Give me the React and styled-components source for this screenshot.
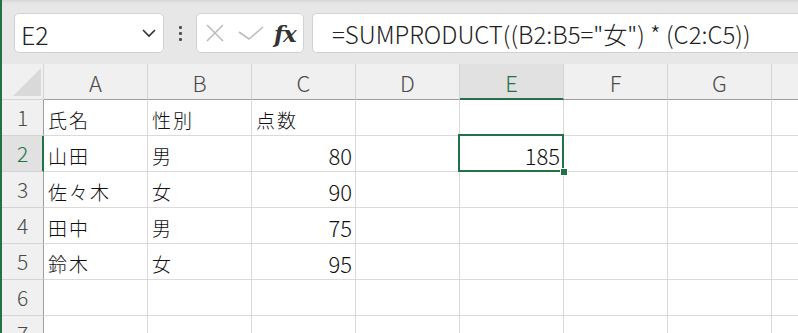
import React from "react";
import styled, { createGlobalStyle, css } from "styled-components";

const GREEN = "#217346";
const FONT = `"Noto Sans CJK JP", "Noto Sans", sans-serif`;

const GlobalStyle = createGlobalStyle`
  html, body { margin: 0; padding: 0; background: #ffffff; overflow: hidden; }
  * { box-sizing: border-box; }
`;

const Frame = styled.div`
  width: 798px;
  height: 333px;
  overflow: hidden;
  border-left: 2px solid ${GREEN};
  display: flex;
  flex-direction: column;
  font-family: ${FONT};
  font-weight: 300;
`;

const Toolbar = styled.div`
  height: 64px;
  flex: none;
  display: flex;
  align-items: flex-start;
  padding: 13px 0 0 12px;
  background: linear-gradient(#d6d6d6 0px, #e4e4e4 3px, #e7e7e7 6px, #e7e7e7 100%);
`;

const NameBox = styled.div`
  width: 150px;
  height: 40px;
  background: #fff;
  border: 1px solid #d2d2d2;
  border-radius: 5px;
  display: flex;
  align-items: center;
  justify-content: space-between;
  padding: 0 6px 0 6px;
  font-size: 25px;
  color: #222;
`;

const NameText = styled.span`
  line-height: 1;
  margin-top: 2px;
`;

const Grip = styled.div`
  width: 32px;
  height: 40px;
  display: flex;
  flex-direction: column;
  align-items: center;
  justify-content: center;
  gap: 3px;
`;

const GripDot = styled.span`
  width: 3px;
  height: 3px;
  background: #505050;
  border-radius: 1px;
`;

const FxBox = styled.div`
  width: 108px;
  height: 40px;
  background: #fff;
  border: 1px solid #d2d2d2;
  border-radius: 5px;
  display: flex;
  align-items: center;
  padding: 0 0 0 8px;
`;

const IconSlot = styled.span`
  display: inline-flex;
  width: ${(p) => p.$w}px;
  justify-content: center;
  align-items: center;
  margin-right: ${(p) => p.$mr || 0}px;
`;

const FxText = styled.span`
  font-family: "DejaVu Serif", "Liberation Serif", serif;
  font-style: italic;
  font-weight: 700;
  font-size: 23px;
  color: #333;
  letter-spacing: -1px;
  margin-left: 9px;
`;

const FormulaInput = styled.div`
  flex: 1;
  margin-left: 8px;
  height: 40px;
  background: #fff;
  border: 1px solid #d2d2d2;
  border-right: none;
  border-radius: 5px 0 0 5px;
  display: flex;
  align-items: center;
  padding-left: 19px;
  font-size: 24px;
  color: #222;
  white-space: nowrap;
`;

const Sheet = styled.div`
  display: grid;
  grid-template-columns: 42px repeat(8, 104px);
  grid-auto-rows: 36px;
`;

const headerBase = css`
  background: ${(p) => (p.$active ? "#e1e1e1" : "#f0f0f0")};
  color: ${(p) => (p.$active ? GREEN : "#4a4a4a")};
  display: flex;
  align-items: center;
  justify-content: center;
  font-size: 22px;
  line-height: 1;
`;

const Corner = styled.div`
  ${headerBase};
  position: relative;
  border-right: 1px solid #d4d4d4;
  border-bottom: 1px solid #d4d4d4;
`;

const CornerTriangle = styled.svg`
  position: absolute;
  right: 2px;
  bottom: 3px;
`;

const ColHeader = styled.div`
  ${headerBase};
  border-right: 1px solid #d4d4d4;
  border-bottom: ${(p) => (p.$active ? `2px solid ${GREEN}` : "1px solid #a0a0a0")};
  padding-top: ${(p) => (p.$active ? 1 : 0)}px;
`;

const RowHeader = styled.div`
  ${headerBase};
  border-bottom: 1px solid #d4d4d4;
  border-right: ${(p) => (p.$active ? `2px solid ${GREEN}` : "1px solid #a0a0a0")};
  padding-left: ${(p) => (p.$active ? 1 : 0)}px;
  font-size: 21px;
`;

const Cell = styled.div`
  position: relative;
  background: #fff;
  border-right: 1px solid #dadada;
  border-bottom: 1px solid #dadada;
  display: flex;
  align-items: center;
  justify-content: ${(p) => (p.$num ? "flex-end" : "flex-start")};
  padding: 2px 3px 0 4px;
  color: #111;
  white-space: nowrap;
  overflow: visible;
`;

const Jp = styled.span`
  font-size: 19px;
  letter-spacing: 2px;
  line-height: 1;
  margin-top: 2px;
`;

const Num = styled.span`
  font-size: 22px;
  line-height: 1;
`;

const Selection = styled.div`
  position: absolute;
  top: -2px;
  left: -2px;
  right: -1px;
  bottom: -1px;
  border: 2px solid ${GREEN};
  pointer-events: none;
  z-index: 2;
`;

const FillHandle = styled.div`
  position: absolute;
  right: -4px;
  bottom: -4px;
  width: 6px;
  height: 6px;
  background: ${GREEN};
  box-shadow: 0 0 0 1px #fff;
  z-index: 3;
`;

const columns = ["A", "B", "C", "D", "E", "F", "G", "H"];
const HIDE_H = { H: true };

const data = {
  1: { A: "氏名", B: "性別", C: "点数" },
  2: { A: "山田", B: "男", C: 80, E: 185 },
  3: { A: "佐々木", B: "女", C: 90 },
  4: { A: "田中", B: "男", C: 75 },
  5: { A: "鈴木", B: "女", C: 95 },
};

const ChevronDown = () => (
  <svg width="16" height="10" viewBox="0 0 16 10">
    <path d="M2 2 L8 8 L14 2" fill="none" stroke="#333" strokeWidth="1.6" />
  </svg>
);

const XIcon = () => (
  <svg width="18" height="18" viewBox="0 0 18 18">
    <path d="M1 1 L17 17 M17 1 L1 17" fill="none" stroke="#bcbcbc" strokeWidth="1.6" />
  </svg>
);

const CheckIcon = () => (
  <svg width="26" height="14" viewBox="0 0 26 14">
    <path d="M1 6 L11 13 L25 1" fill="none" stroke="#bcbcbc" strokeWidth="1.6" />
  </svg>
);

function renderValue(v) {
  if (v === undefined) return null;
  if (typeof v === "number") return <Num>{v}</Num>;
  return <Jp>{v}</Jp>;
}

export default function App() {
  const rows = [1, 2, 3, 4, 5, 6, 7];
  return (
    <>
      <GlobalStyle />
      <Frame>
        <Toolbar>
          <NameBox>
            <NameText>E2</NameText>
            <ChevronDown />
          </NameBox>
          <Grip>
            <GripDot />
            <GripDot />
            <GripDot />
          </Grip>
          <FxBox>
            <IconSlot $w={20} $mr={12}>
              <XIcon />
            </IconSlot>
            <IconSlot $w={28}>
              <CheckIcon />
            </IconSlot>
            <FxText>fx</FxText>
          </FxBox>
          <FormulaInput>=SUMPRODUCT((B2:B5="女") * (C2:C5))</FormulaInput>
        </Toolbar>
        <Sheet>
          <Corner>
            <CornerTriangle width="28" height="28" viewBox="0 0 28 28">
              <path d="M28 0 L28 28 L0 28 Z" fill="#d9d9d9" />
            </CornerTriangle>
          </Corner>
          {columns.map((c) => (
            <ColHeader key={c} $active={c === "E"}>
              {HIDE_H[c] ? "" : c}
            </ColHeader>
          ))}
          {rows.map((r) => (
            <React.Fragment key={r}>
              <RowHeader $active={r === 2}>{r}</RowHeader>
              {columns.map((c) => {
                const v = data[r] ? data[r][c] : undefined;
                return (
                  <Cell key={c} $num={typeof v === "number"}>
                    {renderValue(v)}
                    {r === 2 && c === "E" && (
                      <>
                        <Selection />
                        <FillHandle />
                      </>
                    )}
                  </Cell>
                );
              })}
            </React.Fragment>
          ))}
        </Sheet>
      </Frame>
    </>
  );
}
